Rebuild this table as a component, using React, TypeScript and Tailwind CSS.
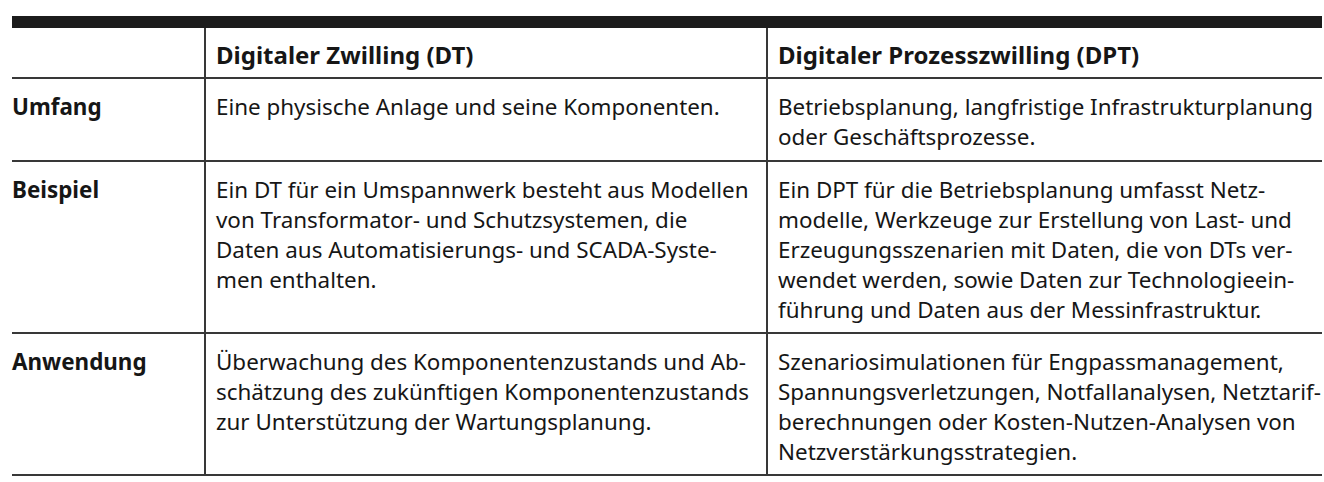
import React from "react";

type Row = {
  label: string;
  dt: string[];
  dpt: string[];
  pb: string;
};

const rows: Row[] = [
  {
    label: "Umfang",
    dt: ["Eine physische Anlage und seine Komponenten."],
    dpt: ["Betriebsplanung, langfristige Infrastrukturplanung", "oder Geschäftsprozesse."],
    pb: "pb-[8px]",
  },
  {
    label: "Beispiel",
    dt: [
      "Ein DT für ein Umspannwerk besteht aus Modellen",
      "von Transformator- und Schutzsystemen, die",
      "Daten aus Automatisierungs- und SCADA-Syste-",
      "men enthalten.",
    ],
    dpt: [
      "Ein DPT für die Betriebsplanung umfasst Netz-",
      "modelle, Werkzeuge zur Erstellung von Last- und",
      "Erzeugungsszenarien mit Daten, die von DTs ver-",
      "wendet werden, sowie Daten zur Technologieein-",
      "führung und Daten aus der Messinfrastruktur.",
    ],
    pb: "pb-[7px]",
  },
  {
    label: "Anwendung",
    dt: [
      "Überwachung des Komponentenzustands und Ab-",
      "schätzung des zukünftigen Komponentenzustands",
      "zur Unterstützung der Wartungsplanung.",
    ],
    dpt: [
      "Szenariosimulationen für Engpassmanagement,",
      "Spannungsverletzungen, Notfallanalysen, Netztarif-",
      "berechnungen oder Kosten-Nutzen-Analysen von",
      "Netzverstärkungsstrategien.",
    ],
    pb: "pb-[7px]",
  },
];

const Lines: React.FC<{ lines: string[] }> = ({ lines }) => (
  <>
    {lines.map((l, i) => (
      <div key={i} className="whitespace-nowrap">
        {l}
      </div>
    ))}
  </>
);

const App: React.FC = () => {
  return (
    <div className="h-[482px] w-[1324px] overflow-hidden bg-white pt-[16px] pl-[12px] font-['Noto_Sans',sans-serif] text-[22.4px] leading-[30px] text-[#161616]">
      <div className="w-[1310px]">
        <div className="h-[12px] bg-[#1c1c1c]" />
        <div className="grid grid-cols-[192px_562px_556px] border-b-2 border-[#383838]">
          <div className="h-[49px]" />
          <div className="h-[49px] border-l-2 border-[#383838] pt-[12px] pl-[10px] text-[24px] font-bold">
            Digitaler Zwilling (DT)
          </div>
          <div className="h-[49px] border-l-2 border-[#383838] pt-[12px] pl-[10px] text-[24px] font-bold">
            Digitaler Prozesszwilling (DPT)
          </div>
        </div>
        {rows.map((r) => (
          <div
            key={r.label}
            className="grid grid-cols-[192px_562px_556px] border-b-2 border-[#383838]"
          >
            <div className={`pt-[13px] ${r.pb} font-bold`}>{r.label}</div>
            <div className={`border-l-2 border-[#383838] pt-[13px] ${r.pb} pl-[10px]`}>
              <Lines lines={r.dt} />
            </div>
            <div className={`border-l-2 border-[#383838] pt-[13px] ${r.pb} pl-[10px]`}>
              <Lines lines={r.dpt} />
            </div>
          </div>
        ))}
      </div>
    </div>
  );
};

export default App;
